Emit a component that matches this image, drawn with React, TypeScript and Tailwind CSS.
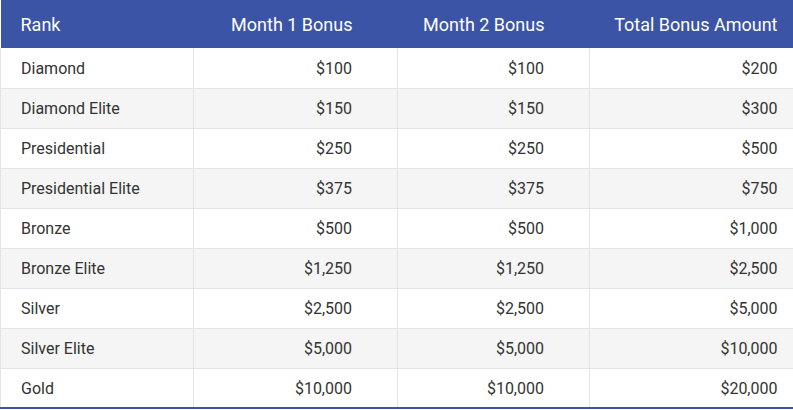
import React from "react";

const rows: [string, string, string, string][] = [
  ["Diamond", "$100", "$100", "$200"],
  ["Diamond Elite", "$150", "$150", "$300"],
  ["Presidential", "$250", "$250", "$500"],
  ["Presidential Elite", "$375", "$375", "$750"],
  ["Bronze", "$500", "$500", "$1,000"],
  ["Bronze Elite", "$1,250", "$1,250", "$2,500"],
  ["Silver", "$2,500", "$2,500", "$5,000"],
  ["Silver Elite", "$5,000", "$5,000", "$10,000"],
  ["Gold", "$10,000", "$10,000", "$20,000"],
];

export default function App() {
  return (
    <div className="w-[793px] h-[410px] bg-white" style={{ fontFamily: "Roboto, sans-serif" }}>
      <table className="w-[793px] border-collapse table-fixed border-b-2 border-b-[#3b54a5]">
        <colgroup>
          <col className="w-[193px]" />
          <col className="w-[204px]" />
          <col className="w-[192px]" />
          <col className="w-[204px]" />
        </colgroup>
        <thead>
          <tr className="h-[48px] bg-[#3b54a5] text-white text-[18px]">
            <th className="text-left font-normal pl-[20px]">Rank</th>
            <th className="text-right font-normal pr-[45px]">Month 1 Bonus</th>
            <th className="text-right font-normal pr-[45px]">Month 2 Bonus</th>
            <th className="text-right font-normal pr-[16px]">Total Bonus Amount</th>
          </tr>
        </thead>
        <tbody className="text-[16px] text-[#333333]">
          {rows.map((r, i) => (
            <tr
              key={r[0]}
              className={`h-[40px] ${i % 2 === 1 ? "bg-[#f5f5f5]" : "bg-white"} ${i < rows.length - 1 ? "border-b border-[#e4e4e4]" : ""}`}
            >
              <td className="pt-[2px] pl-[20px] border-l border-[#e4e4e4] border-r">{r[0]}</td>
              <td className="pt-[2px] text-right pr-[45px] border-r border-[#e4e4e4]">{r[1]}</td>
              <td className="pt-[2px] text-right pr-[45px] border-r border-[#e4e4e4]">{r[2]}</td>
              <td className="pt-[2px] text-right pr-[16px]">{r[3]}</td>
            </tr>
          ))}
        </tbody>
      </table>
    </div>
  );
}
